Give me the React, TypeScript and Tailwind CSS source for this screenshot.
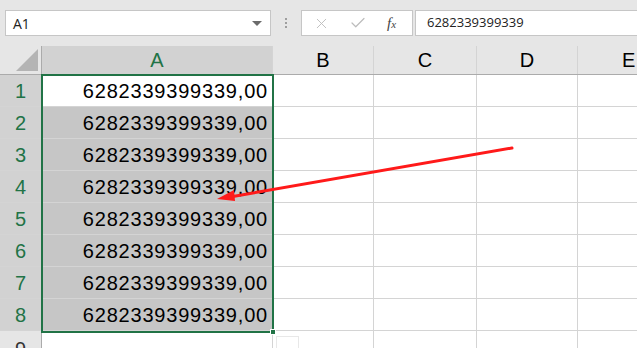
import { X, Check } from "lucide-react";

const rows = [1, 2, 3, 4, 5, 6, 7, 8];
const value = "6282339399339,00";

const Cell = ({ w, children, className = "" }: { w: string; children?: any; className?: string }) => (
  <div className={`${w} shrink-0 h-full border-r border-[#d4d4d4] ${className}`}>{children}</div>
);

export default function App() {
  return (
    <div className="w-[637px] h-[348px] overflow-hidden bg-white relative" style={{ fontFamily: '"Liberation Sans", Arial, sans-serif' }}>
      {/* formula bar */}
      <div className="h-[46px] bg-[#e6e6e6] flex items-start pt-[10px]">
        <div className="ml-[5px] w-[266px] h-[26px] bg-white border border-[#c6c6c6] flex items-center justify-between pl-[7px] pr-[8px]">
          <span className="text-[14px] text-[#222]" style={{ fontFamily: '"Open Sans", sans-serif' }}>A1</span>
          <span className="w-0 h-0 border-l-[5px] border-r-[5px] border-t-[5px] border-l-transparent border-r-transparent border-t-[#6b6b6b]" />
        </div>
        <div className="w-[30px] h-[26px] flex flex-col items-center justify-center gap-[2px]">
          <span className="w-[2px] h-[2px] bg-[#9e9e9e]" />
          <span className="w-[2px] h-[2px] bg-[#9e9e9e]" />
          <span className="w-[2px] h-[2px] bg-[#9e9e9e]" />
        </div>
        <div className="w-[112px] h-[26px] bg-white border border-[#c6c6c6] flex items-center pl-[11px] gap-[19px]">
          <X size={17} strokeWidth={1.3} className="text-[#bcbcbc]" />
          <Check size={18} strokeWidth={1.6} className="text-[#bcbcbc]" />
          <span className="text-[15px] italic text-[#444] ml-[1px]" style={{ fontFamily: '"Liberation Serif", serif' }}>
            f<span className="text-[11px]">x</span>
          </span>
        </div>
        <div className="ml-[2px] flex-1 h-[26px] bg-white border border-[#c6c6c6] border-r-0 flex items-center pl-[11px]">
          <span className="text-[13px] text-[#222]" style={{ fontFamily: '"Open Sans", sans-serif' }}>6282339399339</span>
        </div>
      </div>

      {/* column headers */}
      <div className="h-[29px] flex bg-[#e6e6e6] border-b border-[#ababab] text-[20px]">
        <div className="w-[42px] shrink-0 h-full border-r border-[#ababab] flex items-end justify-end pr-[3px] pb-[3px]">
          <svg width="22" height="22" viewBox="0 0 22 22">
            <polygon points="22,0 22,22 0,22" fill="#b4b4b4" />
          </svg>
        </div>
        <Cell w="w-[231px]" className="bg-[#d2d2d2] border-[#ababab] text-[#217346] flex items-center justify-center">A</Cell>
        <Cell w="w-[101px]" className="border-[#c8c8c8] flex items-center justify-center text-black">B</Cell>
        <Cell w="w-[103px]" className="border-[#c8c8c8] flex items-center justify-center text-black">C</Cell>
        <Cell w="w-[101px]" className="border-[#c8c8c8] flex items-center justify-center text-black">D</Cell>
        <div className="flex-1 flex items-center pl-[44px] text-black">E</div>
      </div>

      {/* rows */}
      {rows.map((r) => (
        <div key={r} className="h-[32px] flex border-b border-[#d4d4d4]">
          <div className="w-[42px] shrink-0 h-full bg-[#d2d2d2] border-r border-[#ababab] flex items-center justify-center text-[20px] text-[#217346]">
            {r}
          </div>
          <Cell
            w="w-[231px]"
            className={`${r === 1 ? "bg-white" : "bg-[#c6c6c6]"} flex items-center justify-end pr-[4px] text-[20px] text-black tracking-[0.8px]`}
          >
            {value}
          </Cell>
          <Cell w="w-[101px]" />
          <Cell w="w-[103px]" />
          <Cell w="w-[101px]" />
          <div className="flex-1" />
        </div>
      ))}
      <div className="h-[32px] flex">
        <div className="w-[42px] shrink-0 h-full bg-[#e6e6e6] border-r border-[#ababab] flex items-start justify-center pt-[6px] text-[20px] leading-[24px] text-[#333]">
          9
        </div>
        <Cell w="w-[231px]" />
        <Cell w="w-[101px]" />
        <Cell w="w-[103px]" />
        <Cell w="w-[101px]" />
      </div>

      {/* selection outline */}
      <div className="absolute left-[41px] top-[74px] w-[233px] h-[259px] border-2 border-[#217346] pointer-events-none" />
      <div className="absolute left-[270px] top-[329px] w-[6px] h-[6px] bg-[#217346] border border-white" />
      {/* paste options ghost */}
      <div className="absolute left-[276px] top-[336px] w-[23px] h-[20px] border border-[#e8e8e8] bg-white" />

      {/* red arrow */}
      <svg className="absolute left-0 top-0 pointer-events-none" width="637" height="348">
        <line x1="512" y1="148" x2="230" y2="197" stroke="#ff1a1a" strokeWidth="3" strokeLinecap="round" />
        <polygon points="217,199 234,190 235,201" fill="#ff1a1a" />
      </svg>
    </div>
  );
}
